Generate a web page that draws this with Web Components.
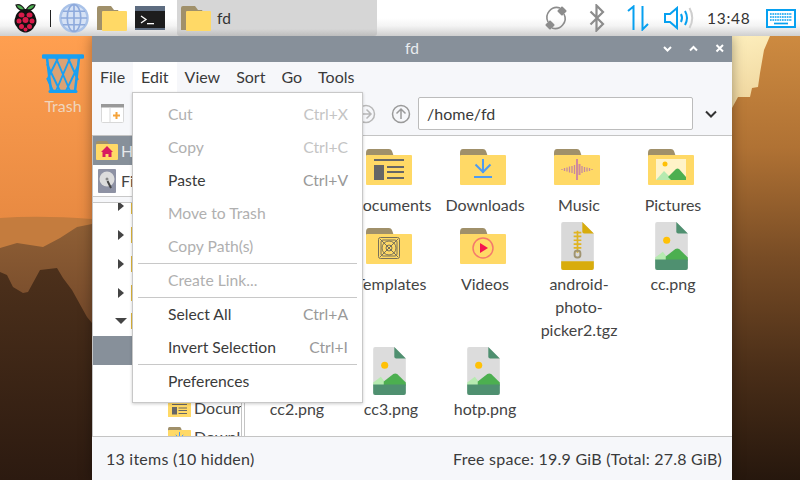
<!DOCTYPE html>
<html>
<head>
<meta charset="utf-8">
<title>fd</title>
<style>
  html, body { margin: 0; height: 100%; overflow: hidden; }
  body { font-family: "Lato", sans-serif; width: 800px; height: 480px; }
</style>
</head>
<body>
<desktop-screen></desktop-screen>

<script>
const FONT = 'Lato, "Noto Sans", sans-serif';

const folderBack = `<path d="M0 4 Q0 0 3 0H23Q25 0 26 2L28 8H0Z" fill="#a0906a"/>`;
const folderFront = `<rect x="0" y="6" width="46" height="30" rx="1" fill="#ffd966"/>`;
const panelFolder = `<svg width="30" height="25" viewBox="0 0 30 25"><path d="M0 2Q0 0 2 0H14L17 4H21L23 8H5V24H0Z" fill="#a0906a"/><rect x="5" y="5" width="25" height="20" rx="1" fill="#ffd966"/></svg>`;

const ICONS = {
  documents: `<svg width="46" height="36" viewBox="0 0 46 36">${folderBack}${folderFront}
    <rect x="8" y="10" width="30" height="2" fill="#666"/><rect x="8" y="16" width="10" height="15" fill="#666"/>
    <rect x="21" y="17" width="17" height="2" fill="#666"/><rect x="21" y="22" width="17" height="2" fill="#666"/><rect x="21" y="28" width="17" height="2" fill="#666"/></svg>`,
  downloads: `<svg width="46" height="36" viewBox="0 0 46 36">${folderBack}${folderFront}
    <path d="M23 10V24M15.500 15.500L23 23L30.500 15.500" fill="none" stroke="#4f9bf0" stroke-width="2"/><rect x="14" y="27" width="18" height="2" fill="#4f9bf0"/></svg>`,
  music: `<svg width="46" height="36" viewBox="0 0 46 36">${folderBack}${folderFront}
    <path d="M8 20V21M10.500 19V22M13 18.500V22.500M15.500 17.500V23.500M18 17V24M20.500 16V25M28 17V24M30.500 18V23M33 18.500V22.500M35.500 19V22M38 20V21" stroke="#c58aa0" stroke-width="1.300"/>
    <rect x="22" y="10" width="2" height="21" fill="#d08a9c"/><rect x="24.500" y="15" width="2" height="11" fill="#d08a9c"/></svg>`,
  pictures: `<svg width="46" height="36" viewBox="0 0 46 36">${folderBack}${folderFront}
    <rect x="8" y="10" width="30" height="21" fill="#fff3c8"/><circle cx="17" cy="15" r="2.500" fill="#ffc107"/>
    <path d="M8 31L16 22L25 31Z" fill="#b6eab0"/><path d="M20 28L28 20Q29.500 19 31 20L38 28V31H23Z" fill="#4caf50"/></svg>`,
  templates: `<svg width="46" height="36" viewBox="0 0 46 36">${folderBack}${folderFront}
    <g fill="none" stroke="#77705a" stroke-width="1"><rect x="12.500" y="9.500" width="21" height="21" rx="2"/><rect x="15" y="12" width="16" height="16" rx="2"/><circle cx="23" cy="20" r="7"/><circle cx="23" cy="20" r="3"/><path d="M14 11L32 29M32 11L14 29"/></g></svg>`,
  videos: `<svg width="46" height="36" viewBox="0 0 46 36">${folderBack}${folderFront}
    <circle cx="23" cy="20" r="10" fill="none" stroke="#f47a6c" stroke-width="1.500"/><path d="M20 15L28 20L20 25Z" fill="#f5134f"/></svg>`,
  archive: `<svg width="33" height="48" viewBox="0 0 34 50"><path d="M2 0H22L34 12V48Q34 50 32 50H2Q0 50 0 48V2Q0 0 2 0Z" fill="#d9d9d9"/>
    <path d="M22 0L34 12H24Q22 12 22 10Z" fill="#d8ac0c"/><path d="M0 41H34V48Q34 50 32 50H2Q0 50 0 48Z" fill="#d8ac0c"/>
    <path d="M17 9V32M13 11H21M13 15H21M13 19H21M13 23H21M13 27H21" stroke="#e0b422" stroke-width="1.800" fill="none"/><rect x="14" y="30" width="6" height="7" rx="2.500" fill="none" stroke="#a09470" stroke-width="2"/></svg>`,
  image: `<svg width="33" height="48" viewBox="0 0 34 50"><path d="M2 0H22L34 12V48Q34 50 32 50H2Q0 50 0 48V2Q0 0 2 0Z" fill="#dcdcdc"/>
    <path d="M22 0L34 12H24Q22 12 22 10Z" fill="#4f9070"/><circle cx="12" cy="19" r="3.700" fill="#ffc107"/>
    <path d="M0 40V37L8 31L15 40Z" fill="#b6eab0"/><path d="M11 36L21 28Q23 27 25 28L34 37V40H11Z" fill="#4caf50"/>
    <path d="M0 39H34V48Q34 50 32 50H2Q0 50 0 48Z" fill="#4f9070"/></svg>`
};

class DesktopWallpaper extends HTMLElement {
  constructor() {
    super();
    this.attachShadow({ mode: 'open' });
    this.shadowRoot.innerHTML = `
      <style>:host { position: absolute; inset: 0; display: block; } svg { display: block; }</style>
      <svg width="800" height="480" viewBox="0 0 800 480">
        <defs>
          <linearGradient id="sky" x1="0" y1="36" x2="0" y2="220" gradientUnits="userSpaceOnUse">
            <stop offset="0" stop-color="#ff9f50"/><stop offset="1" stop-color="#e88a42"/>
          </linearGradient>
          <linearGradient id="glow" x1="732" y1="36" x2="750" y2="108" gradientUnits="userSpaceOnUse">
            <stop offset="0" stop-color="#fdeebc"/><stop offset="1" stop-color="#eed49c"/>
          </linearGradient>
          <linearGradient id="rock" x1="0" y1="270" x2="0" y2="480" gradientUnits="userSpaceOnUse">
            <stop offset="0" stop-color="#4c301b"/><stop offset="1" stop-color="#2c1a10"/>
          </linearGradient>
          <linearGradient id="band" x1="0" y1="224" x2="0" y2="323" gradientUnits="userSpaceOnUse">
            <stop offset="0" stop-color="#8f5f35"/><stop offset="1" stop-color="#74492a"/>
          </linearGradient>
          <linearGradient id="cliff" x1="0" y1="36" x2="0" y2="480" gradientUnits="userSpaceOnUse">
            <stop offset="0" stop-color="#cd8a40"/><stop offset=".25" stop-color="#b07234"/><stop offset=".5" stop-color="#784c25"/>
            <stop offset=".75" stop-color="#4a2e18"/><stop offset="1" stop-color="#26170d"/>
          </linearGradient>
        </defs>
        <rect width="800" height="480" fill="url(#sky)"/>
        <path d="M0 218Q40 215 92 219V300H0Z" fill="#c47c3e"/>
        <path d="M0 248L17 243L43 247L60 238L77 227L92 224V330H0Z" fill="url(#band)"/>
        <path d="M0 272L7 275L13 287L23 293L28 292L40 270L57 268L63 278L72 290L87 317L92 323V480H0Z" fill="url(#rock)"/>
        <rect x="732" y="36" width="68" height="444" fill="url(#cliff)"/>
        <path d="M732 36H770L764 50L760 73L758 87L752 88L750 97L738 97L732 108Z" fill="url(#glow)"/>
      </svg>`;
  }
}
customElements.define('desktop-wallpaper', DesktopWallpaper);

class TopPanel extends HTMLElement {
  constructor() {
    super();
    this.attachShadow({ mode: 'open' });
    this.shadowRoot.innerHTML = `
      <style>
        :host {
          position: relative; z-index: 3; display: flex; align-items: center; height: 36px;
          background: linear-gradient(#fff 0, #fff 50%, #f4f4f4 72%, #cfcfcf 100%);
          font: 15.500px ${FONT}; color: #333;
        }
        svg { display: block; flex: none; }
        .task {
          display: flex; align-items: center; gap: 6px; width: 200px; height: 36px; margin-left: 12px; padding-left: 4px;
          box-sizing: border-box; background: linear-gradient(#d6d6d6, #d6d6d6 80%, #bdbdbd); border-radius: 0 0 3px 3px;
        }
        .spacer { flex: 1; }
        .clock { width: 44px; letter-spacing: .7px; white-space: nowrap; }
      </style>
      <svg style="margin-left:13px" width="25" height="30" viewBox="0 0 25 30">
        <path d="M12 7C9 2 6 1 3 2 4 6 8 8 12 7ZM13 7C16 2 19 1 22 2 21 6 17 8 13 7Z" fill="#4caf50" stroke="#1a1a1a" stroke-width="1.200"/>
        <path d="M12.500 6C6 6 3 11 2.500 14 1 17 1 21 4 24 6 28 10 29.500 12.500 29.500 15 29.500 19 28 21 24 24 21 24 17 22.500 14 22 11 19 6 12.500 6Z" fill="#111"/>
        <g fill="#d81b4a"><ellipse cx="8.500" cy="12" rx="3" ry="2.500"/><ellipse cx="16.500" cy="12" rx="3" ry="2.500"/><circle cx="12.500" cy="17" r="3"/><circle cx="6" cy="18" r="2.500"/><circle cx="19" cy="18" r="2.500"/><circle cx="8.500" cy="23.500" r="2.500"/><circle cx="16.500" cy="23.500" r="2.500"/><circle cx="12.500" cy="26.500" r="2"/></g>
      </svg>
      <div style="width:1px;height:17px;background:#222;margin:0 8px 0 12px;flex:none"></div>
      <svg width="30" height="30" viewBox="0 0 31 31">
        <circle cx="15.500" cy="15.500" r="14" fill="#d6e2f5" stroke="#a9c2e8" stroke-width="2.500"/>
        <g fill="none" stroke="#8eaadc" stroke-width="1.700"><ellipse cx="15.500" cy="15.500" rx="7" ry="14"/><path d="M15.500 2V29M2 15.500H29M4 8.500H27M4 22.500H27"/></g>
      </svg>
      <span style="margin-left:8px;display:block">${panelFolder}</span>
      <svg style="margin-left:8px" width="30" height="24" viewBox="0 0 30 24">
        <rect width="30" height="24" fill="#1d1d1d"/><rect width="30" height="5" fill="#5d6c80"/><rect y="22" width="30" height="2" fill="#5d6c80"/>
        <path d="M6 10L11 13.500L6 17" fill="none" stroke="#fff" stroke-width="1.300"/><rect x="12" y="17" width="7" height="1.300" fill="#fff"/>
      </svg>
      <div class="task">${panelFolder}<span>fd</span></div>
      <div class="spacer"></div>
      <svg width="26" height="26" viewBox="0 0 26 26">
        <g fill="none" stroke="#8c8c8c" stroke-width="1.600"><path d="M5 17A10 10 0 0 1 17 3"/><path d="M21 9A10 10 0 0 1 9 23"/></g>
        <rect x="15.500" y="2.500" width="7" height="7" rx="1" transform="rotate(45 19 6)" fill="#8c8c8c"/><rect x="3.500" y="16.500" width="7" height="7" rx="1" transform="rotate(45 7 20)" fill="#8c8c8c"/>
      </svg>
      <svg style="margin-left:20px" width="16" height="28" viewBox="0 0 16 28">
        <path d="M1.500 7.500L14 20L7.500 26.500V1.500L14 8L1.500 20.500" fill="none" stroke="#8c8c8c" stroke-width="2.200"/>
      </svg>
      <svg style="margin-left:21px" width="24" height="26" viewBox="0 0 24 26">
        <path d="M2 6L7.500 1.500V25M16.500 1V24.500L22 19" fill="none" stroke="#06a0f0" stroke-width="2"/>
      </svg>
      <svg style="margin-left:14px" width="31" height="24" viewBox="0 0 31 24">
        <path d="M1 8H6L13 2V22L6 16H1Z" fill="none" stroke="#06a0f0" stroke-width="2"/>
        <path d="M17 8Q19 12 17 16M21 5Q25 12 21 19" fill="none" stroke="#06a0f0" stroke-width="2"/>
        <path d="M25.500 2Q31 12 25.500 22" fill="none" stroke="#cfcfcf" stroke-width="2"/>
      </svg>
      <span class="clock" style="margin-left:12px">13:48</span>
      <svg style="margin:0 4px 0 15px" width="30" height="19" viewBox="0 0 30 19">
        <rect x="1" y="1" width="28" height="17" fill="#fff" stroke="#06a0f0" stroke-width="2"/>
        <path d="M4 5H26M4 8H26M4 11H26" stroke="#06a0f0" stroke-width="1.700" stroke-dasharray="1.700 .7"/><path d="M8 14.500H22" stroke="#06a0f0" stroke-width="1.700"/>
      </svg>`;
  }
}
customElements.define('top-panel', TopPanel);

class TrashIcon extends HTMLElement {
  constructor() {
    super();
    this.attachShadow({ mode: 'open' });
    this.shadowRoot.innerHTML = `
      <style>
        :host { position: absolute; left: 21px; top: 54px; width: 84px; display: flex; flex-direction: column; align-items: center; gap: 3px;
          font: 16px ${FONT}; color: #efd5bd; }
        svg { display: block; }
      </style>
      <svg width="42" height="39" viewBox="0 0 42 39">
        <path d="M5 4L9 37H33L37 4Z" fill="#dba274"/>
        <path d="M5 10L18 37M5 24L11 37M14 4L28 37M26 4L36 26M36 12L24 37M28 4L14 37M16 4L6 24" fill="none" stroke="#18a0f2" stroke-width="1.900"/>
        <path d="M5 4L9 37H33L37 4" fill="none" stroke="#18a0f2" stroke-width="2.500"/>
        <path d="M1.500 2.500H40.500" stroke="#18a0f2" stroke-width="4.500" stroke-linecap="round"/>
        <path d="M8 37.500H34" stroke="#18a0f2" stroke-width="3" stroke-linecap="round"/>
      </svg>
      <span>Trash</span>`;
  }
}
customElements.define('trash-icon', TrashIcon);

class TitleBar extends HTMLElement {
  constructor() {
    super();
    this.attachShadow({ mode: 'open' });
    this.shadowRoot.innerHTML = `
      <style>
        :host { display: flex; align-items: center; height: 26px; padding-bottom: 2px; box-sizing: border-box; background: #87909a; color: #e9ecef; font: 15.500px ${FONT}; position: relative; justify-content: center; }
        .btns { position: absolute; right: 7px; top: 7px; display: flex; gap: 15px; }
        svg { display: block; }
        path { fill: none; stroke: #fff; stroke-width: 2; }
      </style>
      <slot></slot>
      <div class="btns">
        <svg width="11" height="11" viewBox="0 0 11 11"><path d="M2 4L5.500 7.500L9 4"/></svg>
        <svg width="11" height="11" viewBox="0 0 11 11"><path d="M2 7.500L5.500 4L9 7.500"/></svg>
        <svg width="11" height="11" viewBox="0 0 11 11"><path d="M2.500 2L9 8.500M9 2L2.500 8.500"/></svg>
      </div>`;
  }
}
customElements.define('title-bar', TitleBar);

class MenuBar extends HTMLElement {
  constructor() {
    super();
    this.attachShadow({ mode: 'open' });
    const names = ['File', 'Edit', 'View', 'Sort', 'Go', 'Tools'];
    this.shadowRoot.innerHTML = `
      <style>
        :host { display: flex; height: 30px; font: 16px ${FONT}; color: #3a3a3a; background: #f6f7fa; }
        span { display: flex; align-items: center; padding: 0 8px 2px; }
        .open { background: #fff; }
      </style>
      ${names.map(n => `<span class="${n === 'Edit' ? 'open' : ''}">${n}</span>`).join('')}`;
  }
}
customElements.define('menu-bar', MenuBar);

class PathBar extends HTMLElement {
  constructor() {
    super();
    this.attachShadow({ mode: 'open' });
    this.shadowRoot.innerHTML = `
      <style>
        :host { display: flex; align-items: center; height: 43px; padding-left: 9px; background: #f6f7fa; font: 16px ${FONT}; color: #3a3a3a; box-sizing: border-box; }
        svg { display: block; flex: none; }
        .entry { width: 275px; height: 33px; margin-left: 7px; box-sizing: border-box; border: 1px solid #bcbcbc; border-radius: 2px; background: #fff; display: flex; align-items: center; padding-left: 8px; }
        .spacer { flex: 1; }
      </style>
      <svg width="23" height="19" viewBox="0 0 23 19">
        <rect x="0.500" y="0.500" width="22" height="18" rx="1" fill="#fff" stroke="#d8d8d8"/><rect width="23" height="3.500" fill="#999"/><path d="M9 3.500V18" stroke="#d8d8d8"/>
        <path d="M12 11.500H19M15.500 8V15" stroke="#f5a33a" stroke-width="2"/>
      </svg>
      <div class="spacer"></div>
      <svg width="20" height="20" viewBox="0 0 20 20"><circle cx="10" cy="10" r="8.500" fill="none" stroke="#b8b8b8" stroke-width="1.500"/><path d="M5 10H15M10.500 5.500L15 10L10.500 14.500" fill="none" stroke="#b8b8b8" stroke-width="1.500"/></svg>
      <svg style="margin-left:15px" width="20" height="20" viewBox="0 0 20 20"><circle cx="10" cy="10" r="8.500" fill="none" stroke="#9a9a9a" stroke-width="1.500"/><path d="M10 15V5M5.500 9.500L10 5L14.500 9.500" fill="none" stroke="#9a9a9a" stroke-width="1.500"/></svg>
      <div class="entry">/home/fd</div>
      <svg style="margin:0 14px 0 11px" width="14" height="14" viewBox="0 0 14 14"><path d="M2 4.500L7 9.500L12 4.500" fill="none" stroke="#333" stroke-width="2"/></svg>`;
  }
}
customElements.define('path-bar', PathBar);

class SidePane extends HTMLElement {
  constructor() {
    super();
    this.attachShadow({ mode: 'open' });
    const tree = [
      ['right'], ['right'], ['right'], ['right'], ['down'], ['sel'], ['blank'],
      ['none', 'Documents', 'documents'], ['none', 'Downloads', 'downloads']
    ];
    this.shadowRoot.innerHTML = `
      <style>
        :host { display: flex; flex-direction: column; width: 149px; flex: none; border-right: 1px solid #c4c4c4; background: #fff; font: 16px ${FONT}; color: #444; overflow: hidden; box-sizing: border-box; }
        .place { display: flex; align-items: center; height: 29px; flex: none; white-space: nowrap; }
        .place.home { background: #87909a; color: #e6e9ec; padding-left: 3px; gap: 3px; }
        .place.fs { height: 31px; padding-left: 5px; gap: 5px; border-bottom: 1px solid #c8c8c8; }
        .gap { height: 5px; border-bottom: 1px solid #c8c8c8; background: #f6f7fa; flex: none; }
        .tree { flex: 1; overflow: hidden; }
        .rows { margin-top: -11px; }
        .row { height: 28.750px; display: flex; align-items: center; position: relative; white-space: nowrap; }
        .row.sel { background: #87909a; }
        .arrow { position: absolute; left: 22px; }
        .mini { position: absolute; left: 38px; width: 8px; height: 16px; background: #e2b93b; }
        .named { position: absolute; left: 75px; display: flex; align-items: center; gap: 3px; }
        .named svg { width: 23px; height: 18px; }
        svg { display: block; flex: none; }
      </style>
      <div class="place home">
        <svg width="22" height="19" viewBox="0 0 22 19"><path d="M0 2Q0 0 2 0H11L13 3H0Z" fill="#a0906a"/><rect y="3" width="22" height="16" rx="1" fill="#ffd966"/><path d="M11 5L17 11H15.500V16H12.500V13H9.500V16H6.500V11H5Z" fill="#d81b60"/></svg>
        <span>Home</span>
      </div>
      <div class="place fs">
        <svg width="18" height="24" viewBox="0 0 18 24"><rect width="18" height="24" rx="1" fill="#8e92a4"/><circle cx="9" cy="10" r="7.500" fill="#dcdcdc"/><circle cx="9" cy="10" r="1.500" fill="#888"/><path d="M9.500 12L13 19" stroke="#444" stroke-width="2"/></svg>
        <span>Filesystem</span>
      </div>
      <div class="gap"></div>
      <div class="tree"><div class="rows">
        ${tree.map(([kind, name, icon]) => {
          if (kind === 'sel') return '<div class="row sel"></div>';
          if (kind === 'blank') return '<div class="row"></div>';
          if (kind === 'none') return `<div class="row"><span class="named">${ICONS[icon]}<span>${name}</span></span></div>`;
          const d = kind === 'right' ? 'M3 2L9 7L3 12Z' : 'M0 4H12L6 10Z';
          return `<div class="row"><svg class="arrow" width="12" height="14" viewBox="0 0 12 14"><path d="${d}" fill="#444"/></svg><i class="mini"></i></div>`;
        }).join('')}
      </div></div>`;
  }
}
customElements.define('side-pane', SidePane);

class FileItem extends HTMLElement {
  constructor() {
    super();
    this.attachShadow({ mode: 'open' });
    const icon = this.getAttribute('icon');
    this.shadowRoot.innerHTML = `
      <style>
        :host { display: flex; flex-direction: column; align-items: center; width: 94px; font: 16px/23px ${FONT}; color: #444; text-align: center; }
        .ic { height: 48px; display: flex; align-items: center; justify-content: center; margin-bottom: 2px; transform: translateX(-2px); }
        svg { display: block; }
        .name { width: 90px; overflow-wrap: anywhere; }
      </style>
      <div class="ic">${icon ? ICONS[icon] : ''}</div>
      <div class="name"><slot></slot></div>`;
  }
}
customElements.define('file-item', FileItem);

class FileGrid extends HTMLElement {
  constructor() {
    super();
    this.attachShadow({ mode: 'open' });
    this.shadowRoot.innerHTML = `
      <style>
        :host { flex: 1; display: block; background: #fff; border-left: 1px solid #c4c4c4; margin-left: 2px; overflow: hidden; }
        .grid { display: grid; grid-template-columns: repeat(5, 94px); grid-template-rows: 79px 125px auto; padding: 7px 0 0 5px; }
      </style>
      <div class="grid"><slot></slot></div>`;
  }
}
customElements.define('file-grid', FileGrid);

class StatusBar extends HTMLElement {
  constructor() {
    super();
    this.attachShadow({ mode: 'open' });
    this.shadowRoot.innerHTML = `
      <style>
        :host { display: flex; align-items: center; justify-content: space-between; height: 44px; padding: 0 10px 0 14px; box-sizing: border-box; border-top: 1px solid #c4c4c4; background: #f6f7fa; font: 16px ${FONT}; color: #3a3a3a; letter-spacing: .23px; }
      </style>
      <span>13 items (10 hidden)</span>
      <span>Free space: 19.9 GiB (Total: 27.8 GiB)</span>`;
  }
}
customElements.define('status-bar', StatusBar);

class EditMenu extends HTMLElement {
  constructor() {
    super();
    this.attachShadow({ mode: 'open' });
    const items = [
      ['Cut', 'Ctrl+X', 1], ['Copy', 'Ctrl+C', 1], ['Paste', 'Ctrl+V', 0], ['Move to Trash', '', 1], ['Copy Path(s)', '', 1], '-',
      ['Create Link...', '', 1], '-',
      ['Select All', 'Ctrl+A', 0], ['Invert Selection', 'Ctrl+I', 0], '-',
      ['Preferences', '', 0]
    ];
    this.shadowRoot.innerHTML = `
      <style>
        :host { position: absolute; left: 40px; top: 56px; width: 231px; box-sizing: border-box; padding: 5px 0 4px; background: #fff; border: 1px solid #c8c8c8; box-shadow: 0 1px 3px rgba(0,0,0,.2); font: 15.700px ${FONT}; color: #3a3a3a; z-index: 5; }
        .item { display: flex; justify-content: space-between; align-items: center; height: 33px; box-sizing: border-box; padding: 0 14px 2px 35px; }
        .off { color: #b0b0b0; }
        .key { color: #999; }
        .off .key { color: #c4c4c4; }
        hr { margin: 0 5px; height: 1px; border: 0; background: #c8c8c8; }
      </style>
      ${items.map(it => it === '-' ? '<hr>' :
        `<div class="item ${it[2] ? 'off' : ''}"><span>${it[0]}</span><span class="key">${it[1]}</span></div>`).join('')}`;
  }
}
customElements.define('edit-menu', EditMenu);

class FileWindow extends HTMLElement {
  constructor() {
    super();
    this.attachShadow({ mode: 'open' });
    this.shadowRoot.innerHTML = `
      <style>
        :host { position: absolute; left: 92px; top: 36px; width: 640px; height: 444px; display: flex; flex-direction: column; box-shadow: 0 0 12px rgba(0,0,0,.35); z-index: 2; }
        .body { flex: 1; min-height: 0; display: flex; border-top: 1px solid #c4c4c4; border-left: 1px solid #c4c4c4; background: #fff; }
      </style>
      <title-bar>fd</title-bar>
      <menu-bar></menu-bar>
      <path-bar></path-bar>
      <div class="body">
        <side-pane></side-pane>
        <file-grid><slot></slot></file-grid>
      </div>
      <status-bar></status-bar>
      <edit-menu></edit-menu>`;
  }
}
customElements.define('file-window', FileWindow);

class DesktopScreen extends HTMLElement {
  constructor() {
    super();
    this.attachShadow({ mode: 'open' });
    this.shadowRoot.innerHTML = `
      <style>:host { position: relative; display: block; width: 800px; height: 480px; overflow: hidden; }</style>
      <desktop-wallpaper></desktop-wallpaper>
      <top-panel></top-panel>
      <trash-icon></trash-icon>
      <file-window>
        <file-item></file-item>
        <file-item icon="documents">Documents</file-item>
        <file-item icon="downloads">Downloads</file-item>
        <file-item icon="music">Music</file-item>
        <file-item icon="pictures">Pictures</file-item>
        <file-item></file-item>
        <file-item icon="templates">Templates</file-item>
        <file-item icon="videos">Videos</file-item>
        <file-item icon="archive">android-photo-picker2.tgz</file-item>
        <file-item icon="image">cc.png</file-item>
        <file-item icon="image">cc2.png</file-item>
        <file-item icon="image">cc3.png</file-item>
        <file-item icon="image">hotp.png</file-item>
      </file-window>`;
  }
}
customElements.define('desktop-screen', DesktopScreen);
</script>
</body>
</html>
